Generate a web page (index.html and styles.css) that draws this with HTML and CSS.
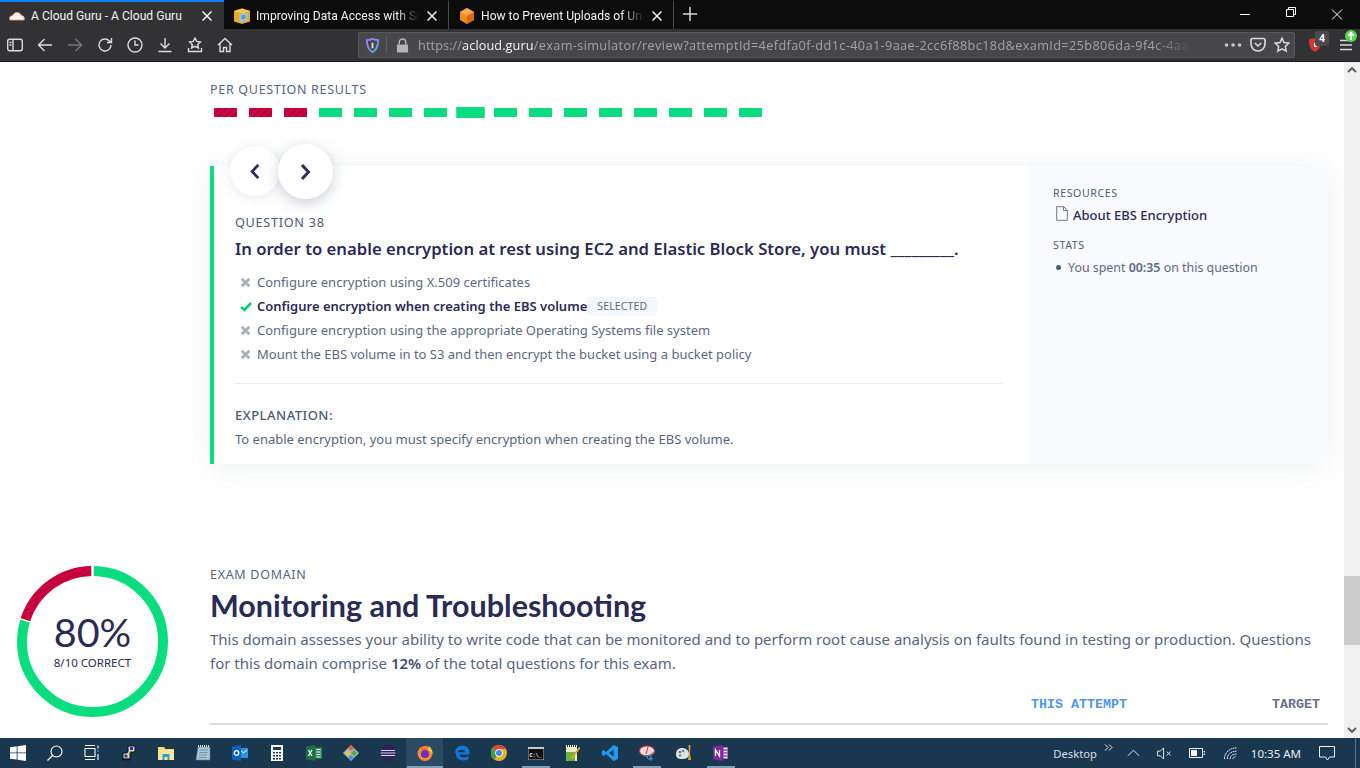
FILE: index.html
```html
<!DOCTYPE html>
<html lang="en">
<head>
<meta charset="utf-8">
<title>A Cloud Guru - A Cloud Guru</title>
<link rel="stylesheet" href="styles.css">
</head>
<body>
<div class="window">
  <div class="tabbar">
    <div class="tab tab-active">
      <svg class="favicon" viewBox="0 0 16 16"><path d="M1 12c-1.300-2.500.5-4.500 2.500-4.300C4.500 5 7.500 3.500 10 5c1.500.5 2 1.500 2.300 2.500 2-.2 3.700 2 2.700 4.500z" fill="#fdf3ea" stroke="#e9a27c" stroke-width=".8"/></svg>
      <span class="tab-title">A Cloud Guru - A Cloud Guru</span>
      <svg class="tab-close" viewBox="0 0 10 10"><path d="M.5.5l9 9M9.500.5l-9 9"/></svg>
    </div>
    <div class="tab tab-sep">
      <svg class="favicon" viewBox="0 0 16 16"><path d="M8 .5L16 3v10.500L8 16 0 13.500V3z" fill="#f3a81c"/><path d="M8 .5L16 3 8 5.500 0 3z" fill="#ffc94d"/><path d="M5.500 6l8-1.700v8.500l-8 1.700z" fill="#8fc9ea"/><path d="M7.500 8h4M7.500 10h4" stroke="#2c6d9c"/></svg>
      <span class="tab-title tab-fade">Improving Data Access with Se</span>
      <svg class="tab-close" viewBox="0 0 10 10"><path d="M.5.5l9 9M9.500.5l-9 9"/></svg>
    </div>
    <div class="tab tab-sep">
      <svg class="favicon" viewBox="0 0 16 16"><path d="M8 0l7 4v8l-7 4-7-4V4z" fill="#f28a26"/><path d="M8 0l7 4-7 4-7-4z" fill="#f9a74b"/><path d="M8 8l7-4v8l-7 4z" fill="#d96c12"/></svg>
      <span class="tab-title tab-fade">How to Prevent Uploads of Une</span>
      <svg class="tab-close" viewBox="0 0 10 10"><path d="M.5.5l9 9M9.500.5l-9 9"/></svg>
    </div>
    <svg class="new-tab" viewBox="0 0 14 14"><path d="M7 0v14M0 7h14"/></svg>
    <div class="win-controls">
      <svg viewBox="0 0 46 29"><path d="M18 14.500h10"/></svg>
      <svg viewBox="0 0 46 29"><path d="M18.500 16.500h7v-7h-7zM20.500 9.500v-2h7v7h-2"/></svg>
      <svg viewBox="0 0 46 29"><path d="M18 9.500l10 10M28 9.500l-10 10"/></svg>
    </div>
  </div>

  <div class="toolbar">
    <div class="nav-icons">
      <svg viewBox="0 0 16 16" class="tool"><rect x=".7" y="2.200" width="14.600" height="11.600" rx="2"/><path d="M6 2.500v11M2.500 5.500h2M2.500 8h2"/></svg>
      <svg viewBox="0 0 16 16" class="tool"><path d="M15 8H1.500M7.500 2L1.500 8l6 6"/></svg>
      <svg viewBox="0 0 16 16" class="tool tool-dim"><path d="M1 8h13.500M8.500 2l6 6-6 6"/></svg>
      <svg viewBox="0 0 16 16" class="tool"><path d="M14 8a6 6 0 1 1-1.800-4.300L14 5.500M14.500 1v4.500H10"/></svg>
      <svg viewBox="0 0 16 16" class="tool"><circle cx="8" cy="8" r="7"/><path d="M8 3.500V8h3.500"/></svg>
      <svg viewBox="0 0 16 16" class="tool"><path d="M8 1v9.500M3.500 6.500L8 11l4.500-4.500M1.500 14.500h13"/></svg>
      <svg viewBox="0 0 16 16" class="tool"><path d="M8 1l1.700 3.400 3.700.5-2.700 2.500.7 3.600L8 9.300l-3.400 1.700.7-3.600L2.600 4.900l3.700-.5zM1.500 11v3.500h13V11"/></svg>
      <svg viewBox="0 0 16 16" class="tool"><path d="M1 8l7-6.500L15 8M3 6.500v8h3.500v-4h3v4H13v-8"/></svg>
    </div>
    <div class="urlbar">
      <svg class="shield" viewBox="0 0 16 16"><defs><linearGradient id="sg" x1="0" y1="0" x2="1" y2="1"><stop offset="0" stop-color="#b06cf5"/><stop offset="1" stop-color="#3fb6f0"/></linearGradient></defs><path d="M8 1c2.500 1 4 1.300 6 1.300 0 6-1.500 10.200-6 12.700C3.500 12.500 2 8.300 2 2.300 4 2.300 5.500 2 8 1z" fill="none" stroke="url(#sg)" stroke-width="2"/><path d="M8 5v6" stroke="#d9d9ff" stroke-width="2"/></svg>
      <span class="url-sep"></span>
      <svg class="lock" viewBox="0 0 14 16"><path d="M1 7h12v8.500H1z" fill="#b4b4b6"/><path d="M3.500 7V4.500a3.500 3.500 0 0 1 7 0V7" fill="none" stroke="#b4b4b6" stroke-width="1.600"/></svg>
      <div class="url"><span>https://</span><b>acloud.guru</b><span class="url-path">/exam-simulator/review?attemptId=4efdfa0f-dd1c-40a1-9aae-2cc6f88bc18d&amp;examId=25b806da-9f4c-4aa</span></div>
      <div class="url-actions">
        <svg class="dots" viewBox="0 0 18 4"><circle cx="2.500" cy="2" r="1.800"/><circle cx="9" cy="2" r="1.800"/><circle cx="15.500" cy="2" r="1.800"/></svg>
        <svg class="tool" viewBox="0 0 16 16"><path d="M2.500 1.500h11a1.500 1.500 0 0 1 1.500 1.500v4a7 7 0 0 1-14 0V3a1.500 1.500 0 0 1 1.500-1.500zM4.800 6L8 9l3.200-3" stroke-width="1.600"/></svg>
        <svg class="tool" viewBox="0 0 16 16"><path d="M8 1.200l2 4.400 4.800.6-3.500 3.300.9 4.700L8 11.900l-4.200 2.300.9-4.700L1.200 6.200 6 5.600z" stroke-width="1.500"/></svg>
      </div>
    </div>
    <div class="ext">
      <svg class="brave" viewBox="0 0 14 16"><path d="M1 2.500L7 1l6 1.500C13 8 12 12.500 7 15 2 12.500 1 8 1 2.500z" fill="#e0342b"/><path d="M6 6h3v4H6z" fill="#fff"/></svg>
      <span class="ext-badge">4</span>
    </div>
    <div class="menu">
      <svg class="tool" viewBox="0 0 14 12"><path d="M1 1.500h12M1 6h12M1 10.500h12" stroke-width="1.500"/></svg>
      <svg class="update" viewBox="0 0 12 12"><circle cx="6" cy="6" r="6" fill="#57d64f"/><path d="M6 10V3M3 5.800L6 2.800l3 3" fill="none" stroke="#fff" stroke-width="1.800"/></svg>
    </div>
  </div>

  <div class="viewport">
    <main class="page">
      <section class="results">
        <h3 class="eyebrow">PER QUESTION RESULTS</h3>
        <div class="bars">
          <span class="bar bar-wrong"></span><span class="bar bar-wrong"></span><span class="bar bar-wrong"></span>
          <span class="bar"></span><span class="bar"></span><span class="bar"></span><span class="bar"></span>
          <span class="bar bar-current"></span>
          <span class="bar"></span><span class="bar"></span><span class="bar"></span><span class="bar"></span><span class="bar"></span><span class="bar"></span><span class="bar"></span><span class="bar"></span>
        </div>
      </section>

      <section class="card">
        <button class="round round-prev" aria-label="Previous"><svg viewBox="0 0 12 18"><path d="M9.500 2L3 9l6.500 7"/></svg></button>
        <button class="round round-next" aria-label="Next"><svg viewBox="0 0 12 18"><path d="M2.500 2L9 9l-6.500 7"/></svg></button>
        <div class="card-main">
          <div class="q-label">QUESTION 38</div>
          <h2 class="q-title">In order to enable encryption at rest using EC2 and Elastic Block Store, you must _________.</h2>
          <ul class="answers">
            <li><svg class="mark" viewBox="0 0 10 10"><path d="M1.500 1.500l7 7M8.500 1.500l-7 7"/></svg>Configure encryption using X.509 certificates</li>
            <li class="correct"><svg class="mark mark-ok" viewBox="0 0 12 10"><path d="M1 5.500l3.500 3L11 1.500"/></svg>Configure encryption when creating the EBS volume<span class="tag">SELECTED</span></li>
            <li><svg class="mark" viewBox="0 0 10 10"><path d="M1.500 1.500l7 7M8.500 1.500l-7 7"/></svg>Configure encryption using the appropriate Operating Systems file system</li>
            <li><svg class="mark" viewBox="0 0 10 10"><path d="M1.500 1.500l7 7M8.500 1.500l-7 7"/></svg>Mount the EBS volume in to S3 and then encrypt the bucket using a bucket policy</li>
          </ul>
          <div class="explain">
            <div class="explain-label">EXPLANATION:</div>
            <p>To enable encryption, you must specify encryption when creating the EBS volume.</p>
          </div>
        </div>
        <aside class="card-side">
          <div class="side-label">RESOURCES</div>
          <div class="resource"><svg viewBox="0 0 12 15"><path d="M.7.700h7l3.600 3.600v10H.7zM7.500.700v3.800h3.800"/></svg>About EBS Encryption</div>
          <div class="side-label side-stats">STATS</div>
          <div class="stat"><span class="dot"></span>You spent&nbsp;<strong>00:35</strong>&nbsp;on this question</div>
        </aside>
      </section>

      <section class="domain">
        <div class="ring">
          <svg viewBox="0 0 152 152">
            <defs>
              <pattern id="hatch" width="5" height="5" patternUnits="userSpaceOnUse" patternTransform="rotate(45)">
                <rect width="5" height="5" fill="#d4003f"/><rect width="1.600" height="5" fill="#a80a3c"/>
              </pattern>
            </defs>
            <circle class="ring-ok" cx="76" cy="76" r="71" pathLength="360" stroke-dasharray="286 74" transform="rotate(-89 76 76)"/>
            <circle class="ring-bad" cx="76" cy="76" r="71" pathLength="360" stroke-dasharray="71 289" transform="rotate(-162 76 76)"/>
          </svg>
          <div class="ring-text">
            <div class="ring-pct">80%</div>
            <div class="ring-sub">8/10 CORRECT</div>
          </div>
        </div>
        <div class="domain-body">
          <h3 class="eyebrow">EXAM DOMAIN</h3>
          <h1 class="domain-title">Monitoring and Troubleshooting</h1>
          <p class="domain-text">This domain assesses your ability to write code that can be monitored and to perform root cause analysis on faults found in testing or production. Questions for this domain comprise <strong>12%</strong> of the total questions for this exam.</p>
          <div class="table-head"><span class="th-attempt">THIS ATTEMPT</span><span class="th-target">TARGET</span></div>
        </div>
      </section>
    </main>
    <div class="scrollbar">
      <svg class="arrow" viewBox="0 0 16 16"><path d="M4 10l4-4 4 4"/></svg>
      <div class="track"><div class="thumb"></div></div>
      <svg class="arrow" viewBox="0 0 16 16"><path d="M4 6l4 4 4-4"/></svg>
    </div>
  </div>

  <footer class="taskbar">
    <div class="task-start">
      <svg class="ti" viewBox="0 0 16 16"><path d="M0 2.300L6.700 1.300v6.200H0zM7.500 1.200L16 0v7.500H7.500zM0 8.300h6.700v6.300L0 13.700zM7.500 8.300H16V16l-8.500-1.200z" fill="#fff"/></svg>
      <svg class="ti" viewBox="0 0 16 16"><circle cx="9.500" cy="6.500" r="5.500" fill="none" stroke="#fff" stroke-width="1.100"/><path d="M5.500 10.500L.5 15.500" stroke="#fff" stroke-width="1.200"/></svg>
      <svg class="ti" viewBox="0 0 16 16"><path d="M1 3.500h10v8H1zM1 .5h10M1 14.500h10M14 .5v3M14 5.500v1M14 9v6" fill="none" stroke="#fff" stroke-width="1.100"/></svg>
    </div>
    <div class="task-apps">
      <span class="app"><svg class="ti" viewBox="0 0 16 16"><path d="M7 1h7v6H7z" fill="#d8d8d8" stroke="#111"/><path d="M9 2h3v3H9z" fill="#2b30c4"/><path d="M2 8h7v6H2z" fill="#d8d8d8" stroke="#111"/><path d="M3.500 9.500h3v3h-3z" fill="#2b30c4"/><path d="M6 10l3-4" stroke="#f5e625" stroke-width="1.500"/><path d="M1 14.500h9" stroke="#111" stroke-width="1.500"/></svg></span>
      <span class="app"><svg class="ti" viewBox="0 0 16 16"><path d="M0 2h6l1.500 2H16v11H0z" fill="#f7d774"/><path d="M0 5h16v10H0z" fill="#fbe39a"/><path d="M4.500 9h7v6h-2v-3H6.500v3h-2z" fill="#2a9fd8"/></svg></span>
      <span class="app"><svg class="ti" viewBox="0 0 16 16"><path d="M3 2h12v13H1z" fill="#a9c8d6" stroke="#5d7c8a" stroke-width=".6"/><path d="M5 5h8M4.500 7.500h8M4 10h8M3.500 12.500h8" stroke="#5d7c8a" stroke-width=".7"/><path d="M3 1h12" stroke="#ddd" stroke-width="2" stroke-dasharray="1 1"/></svg></span>
      <span class="app"><svg class="ti" viewBox="0 0 16 16"><path d="M6 3h10v10H6z" fill="#2f8fe0"/><path d="M8 5l3.500 3L15 5" fill="none" stroke="#fff"/><path d="M0 1.500L9 0v16L0 14.500z" fill="#0a62ba"/><circle cx="4.500" cy="8" r="2.300" fill="none" stroke="#fff" stroke-width="1.300"/></svg></span>
      <span class="app"><svg class="ti" viewBox="0 0 16 16"><path d="M2 0h12v16H2z" fill="#fff"/><path d="M4 2h8v3H4z" fill="#1b3a52"/><path d="M4 7h2v1.500H4zM7 7h2v1.500H7zM10 7h2v1.500h-2zM4 10h2v1.500H4zM7 10h2v1.500H7zM10 10h2v1.500h-2zM4 13h2v1.500H4zM7 13h2v1.500H7zM10 13h2v1.500h-2z" fill="#1b3a52"/></svg></span>
      <span class="app"><svg class="ti" viewBox="0 0 16 16"><path d="M0 1.500L9 0v16L0 14.500z" fill="#1d7044"/><path d="M9 2.500h7v11H9z" fill="#2d8c57"/><path d="M10.500 4.500h4M10.500 7h4M10.500 9.500h4M10.500 12h4" stroke="#fff"/><path d="M2.500 5l3.500 6M6 5l-3.500 6" stroke="#fff" stroke-width="1.300"/></svg></span>
      <span class="app"><svg class="ti" viewBox="0 0 16 16"><path d="M8 0l8 8-8 8-8-8z" fill="#9db6c4"/><path d="M5 3l3-3 3 3-3 3z" fill="#e0633c"/><path d="M11 5l3 3-3 3-3-3z" fill="#58a83f"/><path d="M5 5l3 3-3 3-3-3z" fill="#eac03c"/><path d="M8 10l2.500 2.500L8 15l-2.500-2.500z" fill="#4a86d8"/></svg></span>
      <span class="app"><svg class="ti" viewBox="0 0 16 16"><circle cx="8" cy="8" r="8" fill="#2c2255"/><path d="M1 5.500h14M.5 8h15M1 10.500h14" stroke="#d8d6f0" stroke-width="1"/></svg></span>
      <span class="app app-active"><svg class="ti" viewBox="0 0 16 16"><circle cx="8" cy="8.500" r="7.500" fill="#ff8a2a"/><path d="M12 1c2.500 2 3.500 5 3.500 7.500L11 5z" fill="#ffcb2f"/><circle cx="8" cy="9" r="4" fill="#6b2fc4"/><path d="M4 4c2-1 6-1 7 1-2-.5-3 .5-4 .5S5 5.500 4 4z" fill="#ff4f5e"/></svg></span>
      <span class="app"><svg class="ti" viewBox="0 0 16 16"><path d="M1 8.500C1 3.500 4.500.5 8.500.5c4.500 0 7 3 7 7.500v1.500H5.500c.2 3.500 5 4 9 1.500v3.300c-5 2.500-12.500 1.200-12.500-5 0-2 1-4 3-5-.8 1-1 2-1 3h7c0-3-5-4.500-10 1.200z" fill="#0f78d8"/></svg></span>
      <span class="app"><svg class="ti" viewBox="0 0 16 16"><circle cx="8" cy="8" r="8" fill="#e6b221"/><path d="M8 0a8 8 0 0 1 7 4H8a4 4 0 0 0-3.500 2L2 2a8 8 0 0 1 6-2z" fill="#d6473a"/><path d="M2 2L6 9l-2.500 6A8 8 0 0 1 2 2z" fill="#3d9a48"/><circle cx="8" cy="8" r="3.800" fill="#fff"/><circle cx="8" cy="8" r="3" fill="#4a86e8"/></svg></span>
      <span class="app app-running"><svg class="ti ti-wide" viewBox="0 0 16 13"><path d="M0 0h16v13H0z" fill="#111" stroke="#bbb"/><path d="M0 0h16v2H0z" fill="#ccc"/><text x="1.500" y="9.500" class="cmd-text">C:\_</text></svg></span>
      <span class="app"><svg class="ti" viewBox="0 0 16 16"><path d="M1 2h11v14H1z" fill="#e8efc4"/><path d="M1 7h9v9H1z" fill="#6cb33f"/><path d="M1 1h11" stroke="#eee" stroke-width="2" stroke-dasharray="1 1"/><path d="M6 13l8-11 1.500 1-8 11z" fill="#e4a62b"/></svg></span>
      <span class="app"><svg class="ti" viewBox="0 0 16 16"><path d="M11.500 0L16 2v12l-4.500 2L4 9l-2.500 2L0 10V6l1.500-1L4 7z" fill="#1f9cf0"/><path d="M11.500 4.500L7 8l4.500 3.500z" fill="#1a3750"/></svg></span>
      <span class="app app-running"><svg class="ti" viewBox="0 0 16 16"><ellipse cx="8" cy="6" rx="7.500" ry="5" fill="#f1d9d9" stroke="#c9363c"/><path d="M2 9c3 3 9 3 12-2" fill="none" stroke="#8b5a5a"/><path d="M9 2l-2 7" stroke="#c9363c"/><circle cx="10" cy="12" r="2" fill="none" stroke="#2a9fd8"/><circle cx="12" cy="14" r="1.200" fill="none" stroke="#2a9fd8"/></svg></span>
      <span class="app"><svg class="ti" viewBox="0 0 16 16"><path d="M0 9c0-4 3-6 6-6s7 2 7 6-3 5-7 5-6-1-6-5z" fill="#d9e3ea"/><circle cx="4" cy="7" r="1.300" fill="#d6473a"/><circle cx="7" cy="6" r="1.300" fill="#4a86e8"/><circle cx="4" cy="10.500" r="1.300" fill="#58a83f"/><path d="M12.500 0h2l-.5 8 1 7h-3l1-7z" fill="#e89a2b"/></svg></span>
      <span class="app app-running"><svg class="ti" viewBox="0 0 16 16"><path d="M7 2h8v12H7z" fill="#a867c4"/><path d="M11 3.500h3M11 6.500h3M11 9.500h3M11 12.500h3" stroke="#fff"/><path d="M0 1.500L10 0v16L0 14.500z" fill="#7a2c9e"/><path d="M2.500 11V5l4 6V5" fill="none" stroke="#fff" stroke-width="1.300"/></svg></span>
    </div>
    <div class="tray">
      <span class="tray-desktop">Desktop</span>
      <svg class="tray-i tray-more" viewBox="0 0 9 7"><path d="M1 .5L4 3.500 1 6.500M5 .5L8 3.500 5 6.500"/></svg>
      <svg class="tray-i tray-up" viewBox="0 0 14 8"><path d="M1 7l6-6 6 6"/></svg>
      <svg class="tray-i tray-sound" viewBox="0 0 16 14"><path d="M.5 4.500h3L7 1v12L3.500 9.500h-3zM10.500 5l4 4M14.500 5l-4 4"/></svg>
      <svg class="tray-i tray-batt" viewBox="0 0 16 10"><path d="M.5.500h13v9H.5zM14.500 3.500H16v3h-1.500"/><path class="batt-fill" d="M2 2h6v6H2z"/></svg>
      <svg class="tray-i tray-wifi" viewBox="0 0 14 13"><path d="M.5 12.500C.5 6 5.500.5 13.500.5M3.500 12.500C3.500 8 7 4 13.500 4M6.500 12.500c0-3 2.500-5.500 7-5.500M9.500 12.500c0-1.500 1.500-2.500 3-2.500" stroke-dasharray="2 .6"/></svg>
      <span class="tray-time">10:35 AM</span>
      <svg class="tray-i tray-note" viewBox="0 0 16 15"><path d="M.5.500h15v10.500h-5l-2 3-2-3h-6z"/></svg>
      <span class="tray-edge"></span>
    </div>
  </footer>
</div>
</body>
</html>
```

FILE: styles.css
```css
* { box-sizing: border-box; }
html, body { margin: 0; height: 100%; overflow: hidden; }
body { font-family: "Noto Sans", "Open Sans", sans-serif; color: #2a2b55; background: #fff; }
h1, h2, h3, p, ul { margin: 0; padding: 0; }
.window { display: flex; flex-direction: column; height: 768px; width: 1360px; }

/* tab strip */
.tabbar { display: flex; align-items: stretch; height: 29px; background: #0c0c0d; color: #f2f2f2; font-size: 12.1px; flex: none; }
.tab { width: 225px; display: flex; align-items: center; padding: 0 8px 0 10px; border-top: 2px solid transparent; }
.tab-active { background: #323234; border-top-color: #0a84ff; width: 224px; padding-left: 9px; padding-right: 9px; }
.tab-sep { border-right: 1px solid #4a4a4a; height: 29px; }
.favicon { width: 16px; height: 16px; flex: none; margin-right: 6px; }
.tab-title { flex: 1; white-space: nowrap; overflow: hidden; font-family: Roboto, sans-serif; }
.tab-fade { -webkit-mask-image: linear-gradient(to right, #000 86%, transparent 100%); mask-image: linear-gradient(to right, #000 86%, transparent 100%); }
.tab-close { width: 10px; height: 10px; flex: none; margin: 0 3px 0 8px; fill: none; stroke: #f2f2f2; stroke-width: 1.500; }
.new-tab { width: 14px; height: 14px; margin: 7px 0 0 9px; fill: none; stroke: #d8d8d8; stroke-width: 1.500; }
.win-controls { margin-left: auto; display: flex; }
.win-controls svg { width: 46px; height: 29px; fill: none; stroke: #fff; stroke-width: 1; }

/* nav toolbar */
.toolbar { height: 33px; background: #323234; border-bottom: 1px solid #1b1b1d; display: flex; align-items: center; flex: none; padding-left: 7px; }
.nav-icons { display: flex; gap: 14px; width: 351px; }
.tool { width: 16px; height: 16px; fill: none; stroke: #dcdcdc; stroke-width: 1.400; flex: none; }
.tool-dim { stroke: #77777a; }
.urlbar { width: 937px; height: 26px; background: #474749; border: 1px solid #58585a; border-radius: 2px; display: flex; align-items: center; padding-left: 6px; flex: none; }
.shield { width: 15px; height: 15px; flex: none; }
.url-sep { width: 1px; height: 18px; background: #5f5f61; margin: 0 9px 0 6px; flex: none; }
.lock { width: 13px; height: 15px; flex: none; margin-right: 9px; }
.url { flex: 1; white-space: nowrap; overflow: hidden; font-family: "Open Sans", sans-serif; font-size: 12.7px; color: #a3a3a5; letter-spacing: .1px; -webkit-mask-image: linear-gradient(to right, #000 95%, transparent 100%); mask-image: linear-gradient(to right, #000 95%, transparent 100%); }
.url b { font-weight: 400; color: #f4f4f4; }
.url-path { letter-spacing: .38px; }
.url-actions { display: flex; align-items: center; gap: 8px; padding: 0 4px 0 32px; flex: none; }
.dots { width: 18px; height: 4px; fill: #c8c8c8; }
.ext { position: relative; width: 30px; margin-left: 13px; height: 22px; }
.brave { width: 14px; height: 16px; position: absolute; left: 0; top: 3px; }
.ext-badge { position: absolute; left: 7px; top: -3px; width: 14px; height: 15px; background: #4a4a4c; border-radius: 2px; font-size: 10px; font-weight: 700; line-height: 15px; text-align: center; color: #fff; }
.menu { position: relative; width: 14px; height: 14px; margin-left: 1px; }
.menu .tool { width: 14px; height: 12px; position: absolute; top: 1px; left: 0; }
.update { position: absolute; width: 12px; height: 12px; left: 6px; top: -8px; }

/* page */
.viewport { flex: 1; min-height: 0; display: flex; overflow: hidden; background: #fff; }
.page { flex: 1; min-width: 0; overflow: hidden; padding: 21px 16px 0 0; }
.eyebrow { font-size: 12.5px; font-weight: 400; letter-spacing: .7px; color: #546580; line-height: 14px; }
.results { padding-left: 210px; }
.bars { display: flex; gap: 12px; margin: 11px 0 0 4px; }
.bar { width: 23px; height: 9px; background: #0add7f; display: block; }
.bar-wrong { background: repeating-linear-gradient(135deg, #d4003f 0 3px, #a80a3c 3px 5px); }
.bar-current { transform: scale(1.25); box-shadow: 0 0 5px rgba(40, 50, 80, .14); outline: 3px solid #fff; }

.card { position: relative; display: flex; margin: 49px 0 0 210px; height: 298px; border-left: 4px solid #0add7f; box-shadow: 0 3px 30px rgba(90, 100, 130, .1); }
.round { position: absolute; border: 0; border-radius: 50%; background: #fff; padding: 0; display: flex; align-items: center; justify-content: center; }
.round svg { fill: none; stroke: #2d2e5a; stroke-width: 3; }
.round-prev { left: 16px; top: -20px; width: 50px; height: 50px; box-shadow: 0 2px 12px rgba(60, 70, 100, .12); }
.round-prev svg { width: 12px; height: 17px; }
.round-next { left: 64px; top: -22px; width: 55px; height: 55px; box-shadow: 0 4px 14px rgba(60, 70, 100, .25); z-index: 1; }
.round-next svg { width: 13px; height: 18px; }
.card-main { flex: 1; min-width: 0; padding: 48px 26px 0 21px; }
.q-label { font-size: 12.7px; letter-spacing: .7px; color: #4b5a75; line-height: 17px; }
.q-title { font-size: 16.7px; font-weight: 600; line-height: 24px; margin-top: 6px; color: #2a2b55; white-space: nowrap; }
.answers { list-style: none; margin-top: 9px; padding-left: 5px; border-bottom: 1px solid #ececf0; padding-bottom: 17px; }
.answers li { display: flex; align-items: center; height: 24px; font-size: 13px; color: #5b6a84; white-space: nowrap; }
.answers .correct { color: #2a2b55; font-weight: 600; }
.mark { width: 11px; height: 11px; margin-right: 6px; fill: none; stroke: #a9b0bd; stroke-width: 2.600; flex: none; }
.mark-ok { stroke: #0bcf72; width: 12px; margin-right: 5px; }
.tag { font-size: 10.4px; font-weight: 400; letter-spacing: .2px; color: #5b6a84; background: #f3f6fa; border-radius: 3px; padding: 0 10px; line-height: 19px; margin-top: 1px; }
.explain { padding-top: 23px; }
.explain-label { font-size: 13px; letter-spacing: .5px; font-weight: 500; color: #4b5a75; line-height: 17px; }
.explain p { font-size: 13px; color: #566681; line-height: 18px; margin-top: 6px; }
.card-side { width: 299px; flex: none; background: #f9fafd; padding: 20px 24px; border-radius: 0 4px 4px 0; }
.side-label { font-size: 10.6px; letter-spacing: .6px; color: #4b5a75; line-height: 14px; }
.side-stats { margin-top: 13px; }
.resource { display: flex; align-items: center; font-size: 13px; font-weight: 500; color: #2a2b55; margin-top: 5px; height: 20px; }
.resource svg { width: 12px; height: 15px; margin: -3px 5px 0 3px; fill: none; stroke: #6d7a92; stroke-width: 1; }
.stat { display: flex; align-items: center; font-size: 12.4px; color: #5b6a84; margin-top: 6px; height: 18px; white-space: nowrap; }
.stat strong { font-weight: 600; }
.dot { width: 5px; height: 5px; border-radius: 50%; background: #4f5b72; margin: 0 7px 0 3px; }

.domain { display: flex; margin-top: 101px; }
.ring { position: relative; width: 151px; height: 151px; margin: 1px 42px 0 17px; flex: none; }
.ring svg { width: 151px; height: 151px; display: block; }
.ring-ok { fill: none; stroke: #0add7f; stroke-width: 10; }
.ring-bad { fill: none; stroke: url(#hatch); stroke-width: 10; }
.ring-text { position: absolute; inset: 0 0 3px; display: flex; flex-direction: column; align-items: center; justify-content: center; }
.ring-pct { font-family: Lato, sans-serif; font-size: 39.5px; line-height: 42px; color: #2a2b55; }
.ring-sub { font-size: 11.5px; line-height: 14px; color: #2a2b55; margin-top: 3px; }
.domain-body { flex: 1; min-width: 0; border-bottom: 2px solid #dedede; padding: 3px 0 10px; }
.domain-title { font-family: Lato, sans-serif; font-size: 30.5px; font-weight: 700; line-height: 36px; color: #2a2b55; margin-top: 5px; }
.domain-text { font-size: 15px; line-height: 24px; color: #566681; margin-top: 4px; }
.domain-text strong { font-weight: 600; color: #444d6a; }
.table-head { display: flex; justify-content: flex-end; font-family: "Liberation Mono", monospace; font-size: 13.33px; font-weight: 700; margin-top: 22px; padding-right: 8px; line-height: 16px; }
.th-attempt { color: #4e97ea; margin-right: 145px; }
.th-target { color: #66718a; }

.scrollbar { width: 16px; background: #f0f0f0; display: flex; flex-direction: column; flex: none; }
.arrow { width: 16px; height: 16px; fill: none; stroke: #555; stroke-width: 1.800; flex: none; }
.track { flex: 1; padding-top: 498px; }
.thumb { height: 69px; background: #cdcdcd; }

/* windows taskbar */
.taskbar { height: 30px; background: #1a3750; display: flex; align-items: center; flex: none; color: #e8edf2; font-size: 11.2px; }
.task-start { display: flex; width: 110px; padding-left: 10px; gap: 21px; }
.ti { width: 16px; height: 16px; display: block; flex: none; }
.ti-wide { height: 13px; }
.cmd-text { font-family: "Liberation Mono", monospace; font-size: 5px; font-weight: 700; fill: #fff; }
.task-apps { display: flex; }
.app { width: 37px; height: 30px; display: flex; align-items: center; justify-content: center; }
.app-active { background: linear-gradient(#7f9fb8, #7f9fb8) center bottom / 36px 2px no-repeat, #2b4a63; }
.app-running { background: linear-gradient(#7f9fb8, #7f9fb8) center bottom / 28px 2px no-repeat; }
.tray { margin-left: auto; display: flex; align-items: center; height: 30px; }
.tray-desktop { color: #d8dee4; }
.tray-i { fill: none; stroke: #f2f2f2; stroke-width: 1; flex: none; }
.tray-more { width: 9px; height: 7px; margin: -11px 0 0 7px; }
.tray-up { width: 13px; height: 8px; margin-left: 14px; }
.tray-sound { width: 15px; height: 13px; margin-left: 17px; }
.tray-batt { width: 16px; height: 10px; margin-left: 17px; }
.batt-fill { fill: #f2f2f2; stroke: none; }
.tray-wifi { width: 13px; height: 13px; margin-left: 19px; }
.tray-time { margin-left: 14px; font-size: 11.5px; }
.tray-note { width: 16px; height: 15px; margin-left: 18px; }
.tray-edge { width: 1px; height: 30px; background: #5a7185; margin: 0 4px 0 20px; }
```
